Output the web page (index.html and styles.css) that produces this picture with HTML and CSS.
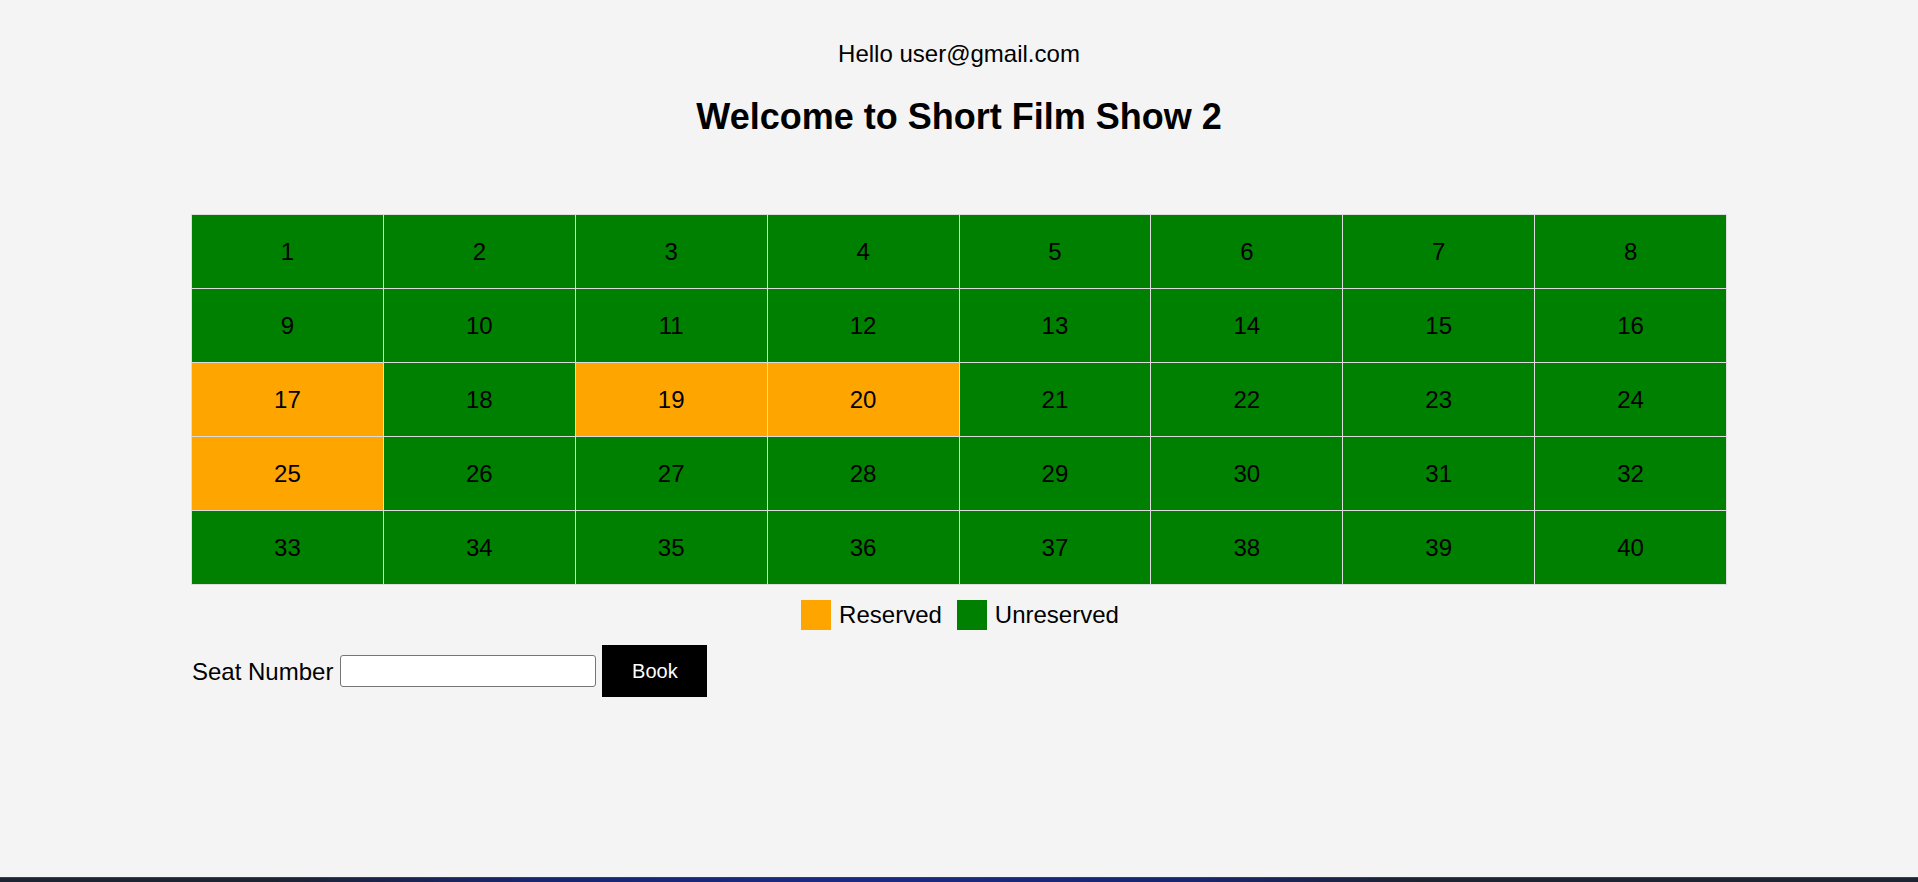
FILE: index.html
```html
<!DOCTYPE html>
<html lang="en">
<head>
<meta charset="utf-8">
<title>Short Film Show 2</title>
<link rel="stylesheet" href="styles.css">
</head>
<body>
<main class="page">
  <p class="greeting">Hello user@gmail.com</p>
  <h2 class="title">Welcome to Short Film Show 2</h2>

  <div class="seats">
    <div class="seat">1</div><div class="seat">2</div><div class="seat">3</div><div class="seat">4</div>
    <div class="seat">5</div><div class="seat">6</div><div class="seat">7</div><div class="seat">8</div>
    <div class="seat">9</div><div class="seat">10</div><div class="seat">11</div><div class="seat">12</div>
    <div class="seat">13</div><div class="seat">14</div><div class="seat">15</div><div class="seat">16</div>
    <div class="seat reserved">17</div><div class="seat">18</div><div class="seat reserved">19</div><div class="seat reserved">20</div>
    <div class="seat">21</div><div class="seat">22</div><div class="seat">23</div><div class="seat">24</div>
    <div class="seat reserved">25</div><div class="seat">26</div><div class="seat">27</div><div class="seat">28</div>
    <div class="seat">29</div><div class="seat">30</div><div class="seat">31</div><div class="seat">32</div>
    <div class="seat">33</div><div class="seat">34</div><div class="seat">35</div><div class="seat">36</div>
    <div class="seat">37</div><div class="seat">38</div><div class="seat">39</div><div class="seat">40</div>
  </div>

  <div class="legend">
    <span class="swatch swatch-reserved"></span><span class="legend-label">Reserved</span>
    <span class="swatch swatch-free"></span><span class="legend-label">Unreserved</span>
  </div>

  <form class="booking">
    <label class="booking-label" for="seat">Seat Number</label>
    <input class="booking-input" id="seat" type="text">
    <button class="booking-button" type="button">Book</button>
  </form>
</main>
<div class="taskbar"></div>
</body>
</html>
```
FILE: styles.css
```css
html, body {
  margin: 0;
  padding: 0;
}

body {
  background: #f4f4f4;
  color: #000;
  font-family: "Liberation Sans", Arial, sans-serif;
  min-height: 882px;
}

.page {
  padding-top: 40px;
}

.greeting {
  margin: 0;
  font-size: 24px;
  line-height: 27px;
  text-align: center;
}

.title {
  margin: 30px 0 0;
  font-size: 36px;
  line-height: 40px;
  font-weight: bold;
  text-align: center;
}

.seats {
  width: 1534px;
  margin: 77px auto 0;
  display: grid;
  grid-template-columns: repeat(8, 1fr);
  grid-auto-rows: 73px;
  gap: 1px;
  padding: 1px;
  background: #dcdcdc;
}

.seat {
  background: #008000;
  display: flex;
  align-items: center;
  justify-content: center;
  font-size: 24px;
  color: #000;
}

.seat.reserved {
  background: #ffa500;
}

.legend {
  margin-top: 15px;
  padding-left: 2px;
  display: flex;
  justify-content: center;
  align-items: center;
  height: 30px;
  font-size: 24px;
}

.swatch {
  width: 30px;
  height: 30px;
  margin-right: 8px;
}

.swatch-reserved {
  background: #ffa500;
}

.swatch-free {
  background: #008000;
}

.legend-label {
  margin-right: 15px;
  line-height: 30px;
}

.legend-label:last-child {
  margin-right: 0;
}

.booking {
  margin: 15px 0 0 192px;
  display: flex;
  align-items: center;
  gap: 6px;
}

.booking-label {
  font-size: 24px;
  line-height: 27px;
  margin-right: 1px;
}

.booking-input {
  box-sizing: border-box;
  width: 256px;
  height: 32px;
  margin: 0;
  padding: 1px 3px;
  border: 1px solid #767676;
  border-radius: 3px;
  background: #fff;
  font-family: "Liberation Sans", Arial, sans-serif;
  font-size: 20px;
}

.booking-button {
  box-sizing: border-box;
  width: 105px;
  height: 52px;
  margin: 0;
  padding: 0;
  border: none;
  background: #000;
  color: #fff;
  font-family: "Liberation Sans", Arial, sans-serif;
  font-size: 20px;
}

.taskbar {
  position: fixed;
  left: 0;
  right: 0;
  bottom: 0;
  height: 5px;
  border-top: 1px solid #3b414c;
  box-sizing: border-box;
  background: linear-gradient(to right, #1d2330 0%, #1d2330 14%, #17266f 28%, #1a2a82 45%, #17266f 62%, #1d2330 74%, #1d2330 100%);
}
```
